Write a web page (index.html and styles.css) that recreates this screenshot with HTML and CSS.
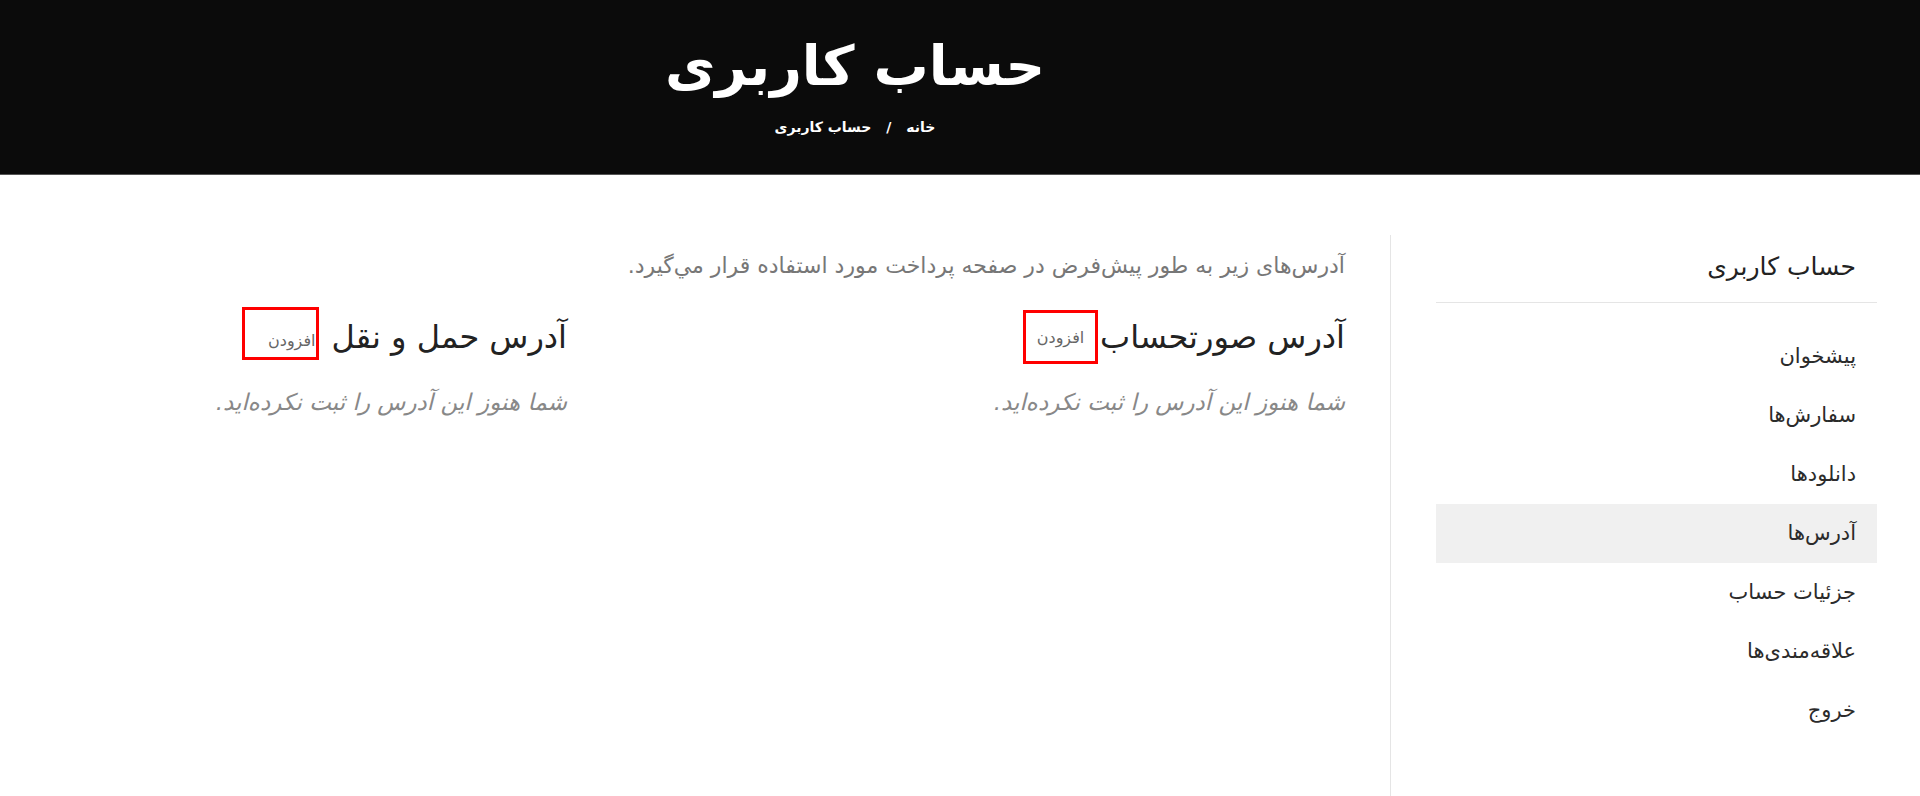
FILE: index.html
```
<!DOCTYPE html>
<html lang="fa" dir="rtl">
<head>
    <meta charset="UTF-8">
    <meta name="viewport" content="width=device-width, initial-scale=1.0">
    <title>حساب کاربری</title>
    <link rel="stylesheet" href="styles.css">
</head>
<body>
    <header class="page-title">
        <div class="page-title-inner">
            <h1>حساب کاربری</h1>
            <nav class="breadcrumb">
                <a href="#">خانه</a>
                <span class="sep">/</span>
                <span>حساب کاربری</span>
            </nav>
        </div>
    </header>

    <main class="account">
        <aside class="account-nav">
            <h3>حساب کاربری</h3>
            <ul>
                <li><a href="#">پیشخوان</a></li>
                <li><a href="#">سفارش‌ها</a></li>
                <li><a href="#">دانلودها</a></li>
                <li class="is-active"><a href="#">آدرس‌ها</a></li>
                <li><a href="#">جزئیات حساب</a></li>
                <li><a href="#">علاقه‌مندی‌ها</a></li>
                <li><a href="#">خروج</a></li>
            </ul>
        </aside>

        <section class="account-content">
            <p class="intro">آدرس‌های زیر به طور پیش‌فرض در صفحه پرداخت مورد استفاده قرار مي‌گيرد.</p>

            <div class="addresses">
                <div class="address">
                    <header class="address-title">
                        <h2>آدرس صورتحساب</h2>
                        <a href="#" class="edit">افزودن</a>
                    </header>
                    <p class="empty">شما هنوز این آدرس را ثبت نکرده‌اید.</p>
                </div>
                <div class="address">
                    <header class="address-title">
                        <h2>آدرس حمل و نقل</h2>
                        <a href="#" class="edit edit--low">افزودن</a>
                    </header>
                    <p class="empty">شما هنوز این آدرس را ثبت نکرده‌اید.</p>
                </div>
            </div>
        </section>
    </main>
</body>
</html>
```

FILE: styles.css
```
*, *::before, *::after{
    box-sizing: border-box;
}
body{
    margin: 0;
    direction: rtl;
    font-family: "DejaVu Sans", sans-serif;
    color: #333;
    background: #fff;
}
a{
    color: inherit;
    text-decoration: none;
}

/* top banner */
.page-title{
    height: 175px;
    background: #0b0b0b;
    border-bottom: 1px solid #555;
}
.page-title-inner{
    padding: 32px 210px 0 0;
    text-align: center;
    color: #fff;
}
.page-title h1{
    margin: 0;
    font-size: 55px;
    font-weight: 600;
    line-height: 68px;
}
.breadcrumb{
    margin-top: 19px;
    font-size: 14px;
    font-weight: bold;
}
.breadcrumb .sep{
    margin: 0 10px;
}

/* page body */
.account{
    display: flex;
    align-items: flex-start;
    padding: 60px 43px 0 0;
    min-height: 621px;
}
.account-nav{
    width: 487px;
    min-height: 561px;
    padding-left: 45px;
    border-left: 1px solid #e5e5e5;
    flex-shrink: 0;
}
.account-nav h3{
    margin: 0;
    padding: 18px 21px 21px;
    font-size: 25px;
    font-weight: normal;
    line-height: 28px;
    color: #222;
    border-bottom: 1px solid #e5e5e5;
}
.account-nav ul{
    margin: 24px 0 0;
    padding: 0;
    list-style: none;
}
.account-nav li a{
    display: block;
    padding: 0 21px;
    line-height: 59px;
    font-size: 21px;
    color: #2b2b2b;
}
.account-nav li.is-active a{
    background: #f0f0f0;
}

.account-content{
    flex: 1;
    padding: 16px 45px 0 0;
}
.intro{
    margin: 0;
    font-size: 22px;
    line-height: 30px;
    color: #777;
}
.addresses{
    display: grid;
    grid-template-columns: 778px 1fr;
    margin-top: 29px;
}
.address-title{
    display: flex;
    align-items: center;
    gap: 2px;
    min-height: 54px;
}
.address-title h2{
    margin: 0;
    font-size: 32px;
    font-weight: normal;
    line-height: 40px;
    color: #222;
}
.edit{
    display: flex;
    align-items: center;
    justify-content: center;
    width: 75px;
    height: 54px;
    border: 3px solid #f00;
    font-size: 16px;
    color: #666;
}
/* second link: label sits at the bottom right corner */
.edit--low{
    width: 77px;
    height: 53px;
    margin: -4px 11px 4px 0;
    align-items: flex-end;
    justify-content: flex-start;
    padding-bottom: 7px;
}
.empty{
    margin: 23px 0 0;
    font-size: 23px;
    line-height: 30px;
    font-style: italic;
    color: #888;
}
```
